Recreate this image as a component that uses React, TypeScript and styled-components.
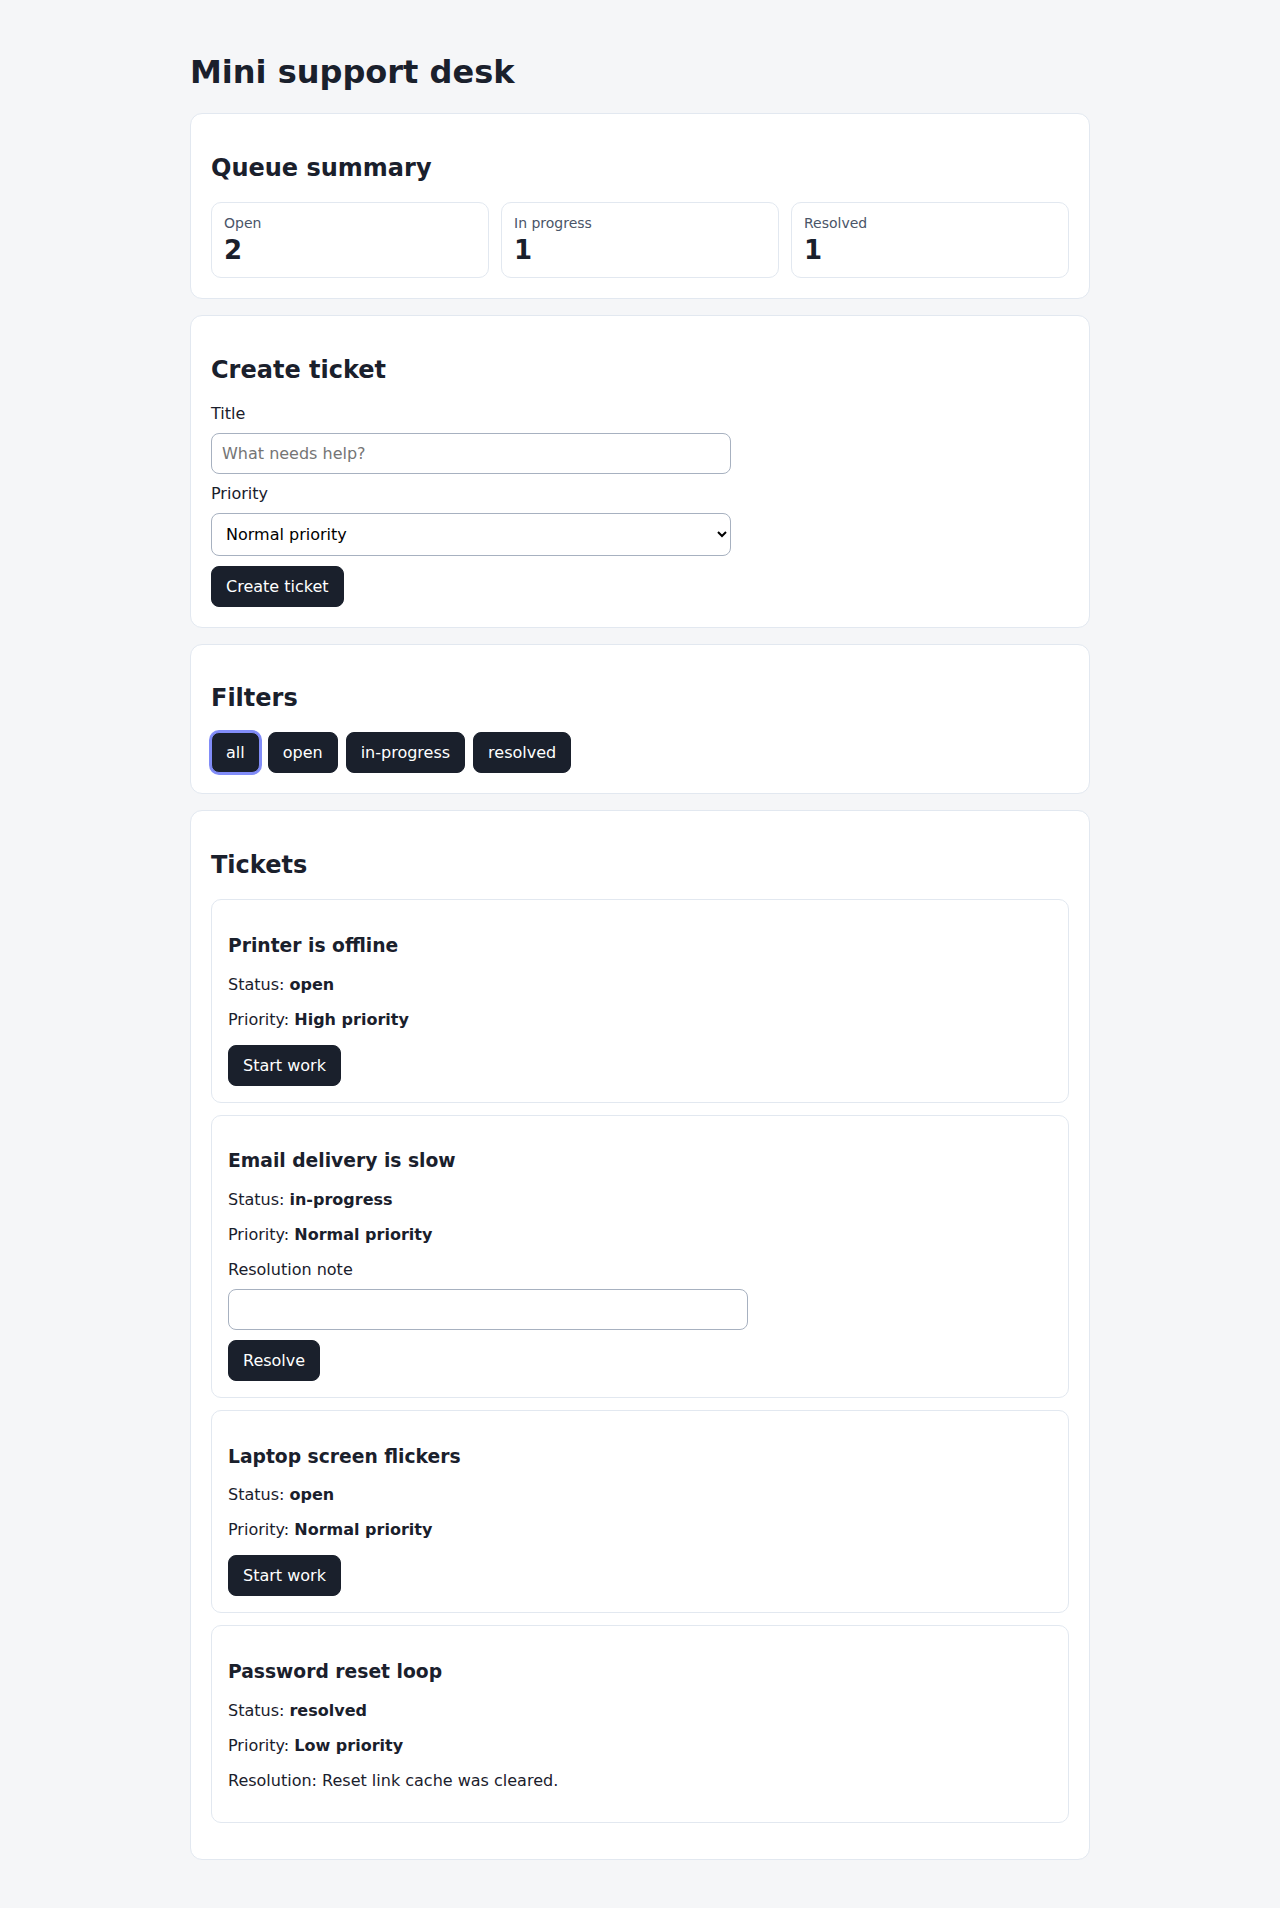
import React, { useState } from "react";
import styled, { createGlobalStyle, css } from "styled-components";

const GlobalStyle = createGlobalStyle`
  html, body {
    margin: 0;
    padding: 0;
    background: #f5f6f8;
  }
  body {
    font-family: "DejaVu Sans", "Noto Sans", sans-serif;
    color: #1a202c;
    min-height: 100vh;
  }
  * { box-sizing: border-box; }
`;

const Page = styled.main`
  max-width: 900px;
  margin: 0 auto;
  padding: 32px 0;
`;

const PageTitle = styled.h1`
  font-size: 32px;
  font-weight: 700;
  margin: 21.44px 0;
  line-height: normal;
`;

const Card = styled.section`
  background: #ffffff;
  border: 1px solid #e2e8f0;
  border-radius: 12px;
  padding: 20px;
  margin-bottom: 16px;
`;

const CardTitle = styled.h2`
  font-size: 24px;
  font-weight: 700;
  margin: 19.92px 0;
  line-height: normal;
`;

const StatGrid = styled.div`
  display: grid;
  grid-template-columns: repeat(3, 1fr);
  gap: 12px;
`;

const StatBox = styled.div`
  border: 1px solid #e2e8f0;
  border-radius: 10px;
  padding: 12px;
`;

const StatLabel = styled.div`
  font-size: 14px;
  color: #4a5568;
`;

const StatValue = styled.div`
  font-size: 26px;
  font-weight: 700;
  margin-top: 4px;
`;

const Stack = styled.div`
  display: flex;
  flex-direction: column;
  align-items: flex-start;
  gap: 10px;
`;

const FieldLabel = styled.label`
  display: block;
  font-size: 16px;
`;

const fieldStyles = css`
  width: 100%;
  max-width: 520px;
  padding: 10px;
  font-family: inherit;
  font-size: 16px;
  color: #000;
  background: #ffffff;
  border: 1px solid #a7b1c0;
  border-radius: 8px;
`;

const TextInput = styled.input`
  ${fieldStyles}
  &::placeholder {
    color: #757575;
  }
`;

const SelectInput = styled.select`
  ${fieldStyles}
`;

const Button = styled.button<{ $active?: boolean }>`
  font-family: inherit;
  font-size: 16px;
  line-height: normal;
  padding: 10px 14px;
  color: #ffffff;
  background: #1a202c;
  border: 1px solid ${(p) => (p.$active ? "#818cf8" : "#1a202c")};
  border-radius: 8px;
  cursor: pointer;
  box-shadow: ${(p) => (p.$active ? "0 0 0 2px #818cf8" : "none")};
`;

const FilterRow = styled.div`
  display: flex;
  flex-wrap: wrap;
  gap: 8px;
`;

const TicketList = styled.div`
  display: flex;
  flex-direction: column;
  gap: 12px;
  margin-bottom: 16px;
`;

const Ticket = styled.article`
  border: 1px solid #e2e8f0;
  border-radius: 10px;
  padding: 16px;
`;

const TicketTitle = styled.h3`
  font-size: 18.72px;
  font-weight: 700;
  margin: 18.72px 0;
  line-height: normal;
`;

const Meta = styled.p`
  font-size: 16px;
  margin: 16px 0;
`;

type Status = "open" | "in-progress" | "resolved";
type Priority = "low" | "normal" | "high";

interface TicketData {
  id: number;
  title: string;
  status: Status;
  priority: Priority;
  resolution?: string;
}

const priorityLabel: Record<Priority, string> = {
  low: "Low priority",
  normal: "Normal priority",
  high: "High priority",
};

const initialTickets: TicketData[] = [
  { id: 1, title: "Printer is offline", status: "open", priority: "high" },
  { id: 2, title: "Email delivery is slow", status: "in-progress", priority: "normal" },
  { id: 3, title: "Laptop screen flickers", status: "open", priority: "normal" },
  {
    id: 4,
    title: "Password reset loop",
    status: "resolved",
    priority: "low",
    resolution: "Reset link cache was cleared.",
  },
];

const filters: Array<"all" | Status> = ["all", "open", "in-progress", "resolved"];

export default function App() {
  const [tickets, setTickets] = useState<TicketData[]>(initialTickets);
  const [filter, setFilter] = useState<"all" | Status>("all");
  const [title, setTitle] = useState("");
  const [priority, setPriority] = useState<Priority>("normal");
  const [notes, setNotes] = useState<Record<number, string>>({});

  const count = (s: Status) => tickets.filter((t) => t.status === s).length;

  const createTicket = () => {
    if (!title.trim()) return;
    setTickets((prev) => [
      ...prev,
      { id: Date.now(), title: title.trim(), status: "open", priority },
    ]);
    setTitle("");
    setPriority("normal");
  };

  const startWork = (id: number) =>
    setTickets((prev) => prev.map((t) => (t.id === id ? { ...t, status: "in-progress" } : t)));

  const resolve = (id: number) =>
    setTickets((prev) =>
      prev.map((t) =>
        t.id === id ? { ...t, status: "resolved", resolution: notes[id] || "" } : t
      )
    );

  const visible = filter === "all" ? tickets : tickets.filter((t) => t.status === filter);

  return (
    <>
      <GlobalStyle />
      <Page>
        <PageTitle>Mini support desk</PageTitle>

        <Card>
          <CardTitle>Queue summary</CardTitle>
          <StatGrid>
            <StatBox>
              <StatLabel>Open</StatLabel>
              <StatValue>{count("open")}</StatValue>
            </StatBox>
            <StatBox>
              <StatLabel>In progress</StatLabel>
              <StatValue>{count("in-progress")}</StatValue>
            </StatBox>
            <StatBox>
              <StatLabel>Resolved</StatLabel>
              <StatValue>{count("resolved")}</StatValue>
            </StatBox>
          </StatGrid>
        </Card>

        <Card>
          <CardTitle>Create ticket</CardTitle>
          <Stack>
            <FieldLabel htmlFor="ticket-title">Title</FieldLabel>
            <TextInput
              id="ticket-title"
              placeholder="What needs help?"
              value={title}
              onChange={(e) => setTitle(e.target.value)}
            />
            <FieldLabel htmlFor="ticket-priority">Priority</FieldLabel>
            <SelectInput
              id="ticket-priority"
              value={priority}
              onChange={(e) => setPriority(e.target.value as Priority)}
            >
              <option value="low">Low priority</option>
              <option value="normal">Normal priority</option>
              <option value="high">High priority</option>
            </SelectInput>
            <Button type="button" onClick={createTicket}>
              Create ticket
            </Button>
          </Stack>
        </Card>

        <Card>
          <CardTitle>Filters</CardTitle>
          <FilterRow>
            {filters.map((f) => (
              <Button key={f} type="button" $active={filter === f} onClick={() => setFilter(f)}>
                {f}
              </Button>
            ))}
          </FilterRow>
        </Card>

        <Card>
          <CardTitle>Tickets</CardTitle>
          <TicketList>
            {visible.map((t) => (
              <Ticket key={t.id}>
                <TicketTitle>{t.title}</TicketTitle>
                <Meta>
                  Status: <strong>{t.status}</strong>
                </Meta>
                <Meta>
                  Priority: <strong>{priorityLabel[t.priority]}</strong>
                </Meta>
                {t.status === "open" && (
                  <Button type="button" onClick={() => startWork(t.id)}>
                    Start work
                  </Button>
                )}
                {t.status === "in-progress" && (
                  <Stack>
                    <FieldLabel htmlFor={`note-${t.id}`}>Resolution note</FieldLabel>
                    <TextInput
                      id={`note-${t.id}`}
                      value={notes[t.id] || ""}
                      onChange={(e) => setNotes((n) => ({ ...n, [t.id]: e.target.value }))}
                    />
                    <Button type="button" onClick={() => resolve(t.id)}>
                      Resolve
                    </Button>
                  </Stack>
                )}
                {t.status === "resolved" && <Meta>Resolution: {t.resolution}</Meta>}
              </Ticket>
            ))}
          </TicketList>
        </Card>
      </Page>
    </>
  );
}
